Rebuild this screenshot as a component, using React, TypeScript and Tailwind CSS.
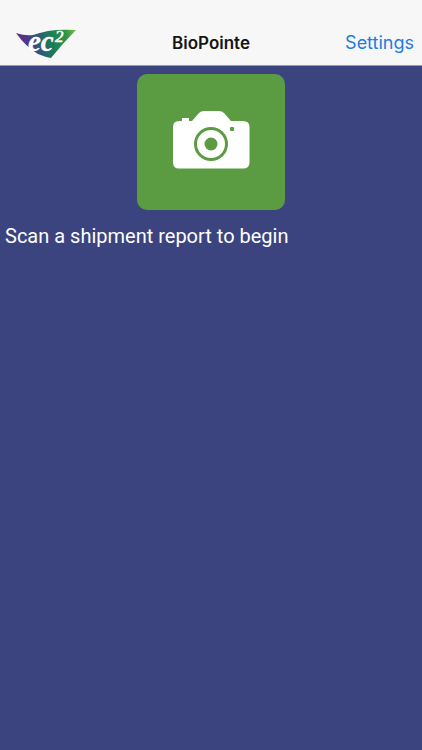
import { useState } from "react";

const Logo = () => (
  <svg viewBox="0 -5 62 40" className="ml-[7px] h-10 w-[62px]" role="img" aria-label="ec2">
    <defs>
      <linearGradient id="logoFill" gradientUnits="userSpaceOnUse" x1="1" y1="14" x2="61" y2="2">
        <stop offset="0" stopColor="#642a88" />
        <stop offset="0.22" stopColor="#4d3a8a" />
        <stop offset="0.4" stopColor="#2a6074" />
        <stop offset="0.58" stopColor="#1b7d55" />
        <stop offset="0.82" stopColor="#2c9645" />
        <stop offset="1" stopColor="#7cc042" />
      </linearGradient>
    </defs>
    <path d="M1 5 Q10 8 18 7 Q24 5 33 3 Q45 1 61 2 Q48 15 36 30 Q30 29 23 26 Q11 19 1 5Z" fill="url(#logoFill)" />
    <g fill="#ffffff" stroke="#ffffff" fontFamily="Liberation Serif, serif" fontStyle="italic">
      <text x="13" y="23" fontSize="29" fontWeight="700" strokeWidth="0.3">ec</text>
      <text x="40" y="14" fontSize="17" strokeWidth="0.6">2</text>
    </g>
  </svg>
);

const CameraIcon = () => (
  <svg viewBox="0 0 78 64" className="h-16 w-[78px]" aria-hidden="true">
    <path
      d="M7 11 H10 V8 H17 V11 H20 L27 3 Q29 1 32 1 H47 Q50 1 52 3 L59 11 H71 Q77.5 11 77.5 17 V52.5 Q77.5 58.5 71 58.5 H7 Q1 58.5 1 52.5 V17 Q1 11 7 11Z"
      fill="#ffffff"
    />
    <circle cx="39" cy="34" r="15.5" fill="none" stroke="#5b9c43" strokeWidth="3" />
    <circle cx="39" cy="34" r="6.5" fill="#5b9c43" />
    <rect x="58" y="17" width="4" height="4" rx="1" fill="#5b9c43" />
  </svg>
);

export default function App() {
  const [scanning, setScanning] = useState<boolean>(false);

  return (
    <div className="flex min-h-screen flex-col bg-[#3c447f] font-['Inter',sans-serif]">
      {/* Navigation bar, with room for the status bar above it */}
      <header className="border-b border-[#9a9ba8] bg-[#f7f7f7] pt-[21px]">
        <div className="flex items-center px-2">
          <div className="flex-1">
            <Logo />
          </div>
          <h1 className="py-2.5 text-center text-[17px] leading-6 font-semibold text-[#151515]">BioPointe</h1>
          <div className="flex flex-1 justify-end">
            <a href="#settings" className="text-[18px] leading-6 text-[#1c7ce5]">
              Settings
            </a>
          </div>
        </div>
      </header>

      <main className="flex flex-col pt-2">
        <button
          type="button"
          aria-label="Scan"
          aria-pressed={scanning}
          onClick={() => setScanning(!scanning)}
          className="flex h-[136px] w-[148px] items-center justify-center self-center rounded-[10px] bg-[#5b9c43]"
        >
          <CameraIcon />
        </button>
        <p className="mt-3 px-[5px] font-['Roboto',sans-serif] text-[20px] leading-7 text-white">
          Scan a shipment report to begin
        </p>
      </main>
    </div>
  );
}
